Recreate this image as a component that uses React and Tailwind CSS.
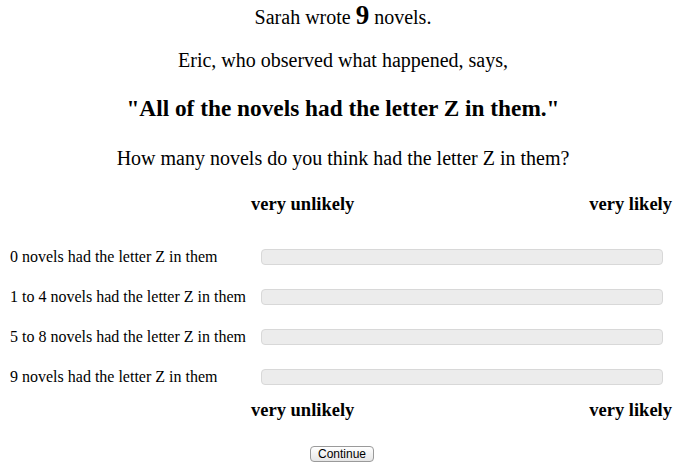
import React from 'react';

const rows = [
    "0 novels had the letter Z in them",
    "1 to 4 novels had the letter Z in them",
    "5 to 8 novels had the letter Z in them",
    "9 novels had the letter Z in them",
];

const Scale = () => (
    <div className="flex h-[26px] items-center">
        <div className="w-[251px] shrink-0" />
        <div className="flex w-[421px] justify-between text-[18.5px] font-bold">
            <span>very unlikely</span>
            <span>very likely</span>
        </div>
    </div>
);

export default function App() {
    return (
        <div className="w-[686px] h-[469px] bg-white text-black font-['Liberation_Serif',serif]">
            <div className="flex h-[34px] items-center justify-center text-[20px]">
                <span>Sarah wrote <b className="text-[27px] leading-none">9</b> novels.</span>
            </div>
            <div className="flex h-[52px] items-center justify-center text-[20px]">
                Eric, who observed what happened, says,
            </div>
            <div className="flex h-[44px] items-center justify-center text-[23.3px] font-bold">
                "All of the novels had the letter Z in them."
            </div>
            <div className="flex h-[56px] items-center justify-center text-[20px]">
                How many novels do you think had the letter Z in them?
            </div>
            <div className="pt-[6px]">
                <Scale />
            </div>
            <div className="mt-[19px]">
                {rows.map((label) => (
                    <div key={label} className="flex h-[40px] items-center">
                        <div className="w-[261px] shrink-0 pl-[10px] text-[16px]">{label}</div>
                        <div className="h-[16px] w-[402px] rounded-[4px] border border-[#d8d8d8] bg-[#ececec]" />
                    </div>
                ))}
            </div>
            <div className="pt-[1px]">
                <Scale />
            </div>
            <div className="flex justify-center pt-[22px] pr-[2px]">
                <button className="h-[16px] w-[64px] rounded-[4px] border border-[#9a9a9a] bg-gradient-to-b from-white to-[#e6e6e6] font-['Liberation_Sans',sans-serif] text-[12px] leading-none text-black">
                    Continue
                </button>
            </div>
        </div>
    );
}
